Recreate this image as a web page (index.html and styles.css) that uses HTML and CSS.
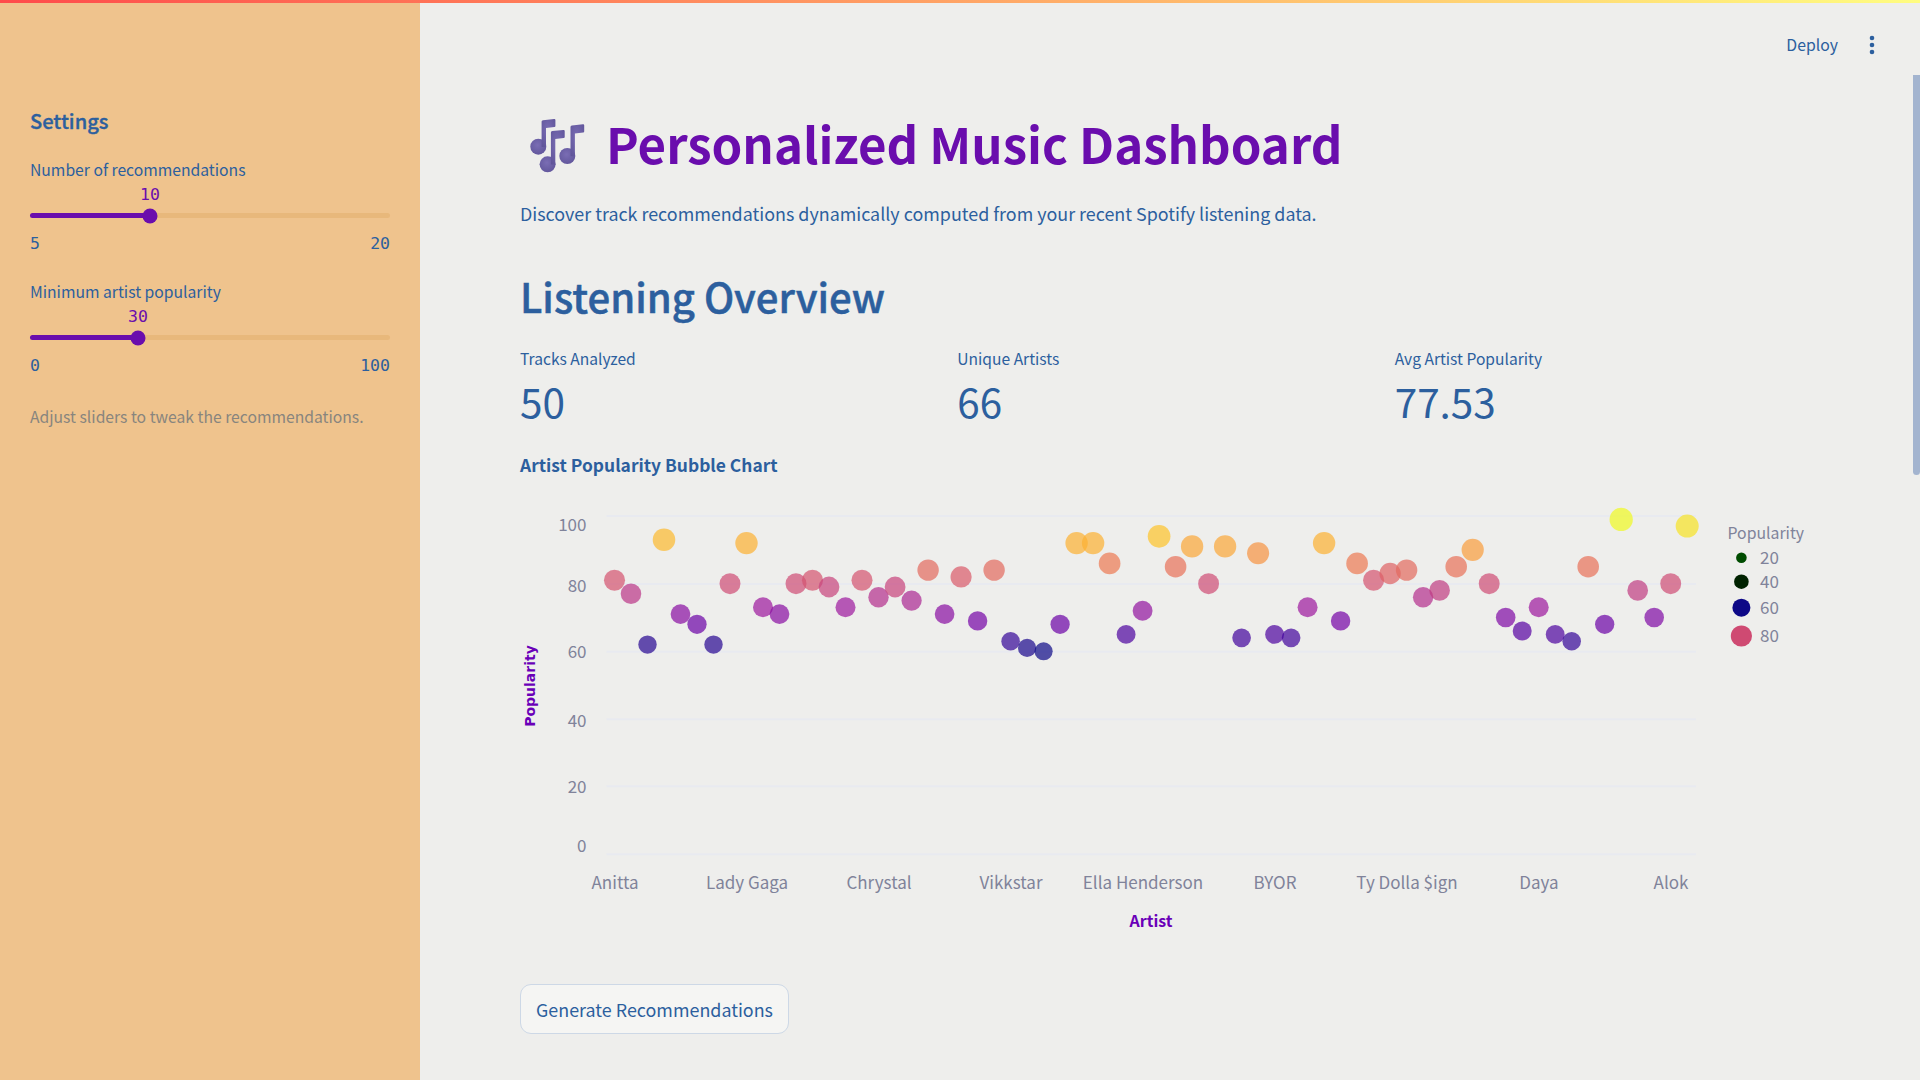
FILE: index.html
```html
<!DOCTYPE html>
<html lang="en">
<head>
<meta charset="utf-8">
<title>Personalized Music Dashboard</title>
<link rel="stylesheet" href="styles.css">
</head>
<body>
<div class="top-stripe"></div>
<div class="scroll-thumb"></div>
<div class="app">
  <aside class="sidebar">
    <h3 class="side-title">Settings</h3>
    <div class="field">
      <div class="field-label">Number of recommendations</div>
      <div class="slider">
        <div class="slider-fill" style="width:33.33%"></div>
        <div class="slider-thumb" style="left:33.33%"></div>
        <div class="slider-value" style="left:33.33%">10</div>
      </div>
      <div class="slider-ends"><span>5</span><span>20</span></div>
    </div>
    <div class="field">
      <div class="field-label">Minimum artist popularity</div>
      <div class="slider">
        <div class="slider-fill" style="width:30%"></div>
        <div class="slider-thumb" style="left:30%"></div>
        <div class="slider-value" style="left:30%">30</div>
      </div>
      <div class="slider-ends"><span>0</span><span>100</span></div>
    </div>
    <p class="side-hint">Adjust sliders to tweak the recommendations.</p>
  </aside>
  <main class="main">
    <header class="toolbar">
      <span class="deploy">Deploy</span>
      <svg class="kebab" width="6" height="20" viewBox="0 0 6 20"><circle cx="3" cy="3" r="2.3"/><circle cx="3" cy="10" r="2.3"/><circle cx="3" cy="17" r="2.3"/></svg>
    </header>
    <div class="content">
      <h1 class="title">
        <svg class="title-icon" width="66" height="64" viewBox="0 0 66 64">
          <defs><radialGradient id="noteShade" cx="45%" cy="40%" r="70%"><stop offset="0" stop-color="#7a6db4"/><stop offset="1" stop-color="#5f5499"/></radialGradient></defs>
          <g fill="url(#noteShade)">
            <circle cx="18.3" cy="32.7" r="8"/><path d="M21.6 33V7.6Q21.6 6.4 23 6.2L34.2 5q1.2-.1 1.2 1.1V12q0 1-1 1.1L26 14V33z"/>
            <circle cx="27.6" cy="50.3" r="8"/><path d="M30.9 50.6V18.5q0-1.2 1.4-1.4L43.5 16q1.2-.1 1.2 1.100V23q0 1-1 1.100L35.300 25V50.600z"/>
            <circle cx="47.300" cy="42" r="8"/><path d="M50.500 42.300V13q0-1.200 1.400-1.400L63 10.200q1.200-.100 1.200 1.100V17.400q0 1-1 1.100L54.900 19.400V42.300z"/>
          </g>
        </svg>
        <span>Personalized Music Dashboard</span>
      </h1>
      <p class="lead">Discover track recommendations dynamically computed from your recent Spotify listening data.</p>
      <h2 class="section">Listening Overview</h2>
      <div class="metrics">
        <div><div class="metric-label">Tracks Analyzed</div><div class="metric-value">50</div></div>
        <div><div class="metric-label">Unique Artists</div><div class="metric-value">66</div></div>
        <div><div class="metric-label">Avg Artist Popularity</div><div class="metric-value">77.53</div></div>
      </div>
      <div class="chart-title">Artist Popularity Bubble Chart</div>
      <svg class="chart" id="chart" width="1296" height="470" viewBox="0 0 1296 470">
        <g class="grid">
          <line x1="86.500" x2="1176" y1="26" y2="26"/>
          <line x1="86.500" x2="1176" y1="94" y2="94"/>
          <line x1="86.500" x2="1176" y1="161.700" y2="161.700"/>
          <line x1="86.500" x2="1176" y1="229.300" y2="229.300"/>
          <line x1="86.500" x2="1176" y1="296.300" y2="296.300"/>
          <line x1="86.500" x2="1176" y1="364.300" y2="364.300"/>
        </g>
        <g class="tick y-tick">
          <text x="66.500" y="33.500">100</text>
          <text x="66.500" y="94.200">80</text>
          <text x="66.500" y="160.500">60</text>
          <text x="66.500" y="229">40</text>
          <text x="66.500" y="295.500">20</text>
          <text x="66.500" y="354.500">0</text>
        </g>
        <g class="tick x-tick">
          <text x="95" y="391.500">Anitta</text>
          <text x="227" y="391.500">Lady Gaga</text>
          <text x="359" y="391.500">Chrystal</text>
          <text x="491" y="391.500">Vikkstar</text>
          <text x="623" y="391.500">Ella Henderson</text>
          <text x="755" y="391.500">BYOR</text>
          <text x="887" y="391.500">Ty Dolla $ign</text>
          <text x="1019" y="391.500">Daya</text>
          <text x="1151" y="391.500">Alok</text>
        </g>
        <text class="axis-title axis-y" transform="translate(9.500 196) rotate(-90)">Popularity</text>
        <text class="axis-title axis-x" x="631" y="430">Artist</text>
        <g id="bubbles"></g>
        <g class="legend">
          <text class="legend-title" x="1207.500" y="42">Popularity</text>
          <circle class="lg20" cx="1221.400" cy="67.700" r="5.300"/><text x="1240" y="66.200">20</text>
          <circle class="lg40" cx="1221.400" cy="91.700" r="7.300"/><text x="1240" y="90.200">40</text>
          <circle class="lg60" cx="1221.400" cy="117.700" r="9"/><text x="1240" y="116.200">60</text>
          <circle class="lg80" cx="1221.400" cy="146" r="10.600"/><text x="1240" y="144.500">80</text>
        </g>
      </svg>
      <button class="generate" type="button">Generate Recommendations</button>
    </div>
  </main>
</div>
<script src="chart.js"></script>
</body>
</html>
```
FILE: styles.css
```css
* { box-sizing: border-box; }
html, body { margin: 0; height: 100%; overflow: hidden; }
body {
  background: #eeeeec;
  color: #2c5f9e;
  font-family: "Noto Sans CJK SC", "Noto Sans", sans-serif;
}
.top-stripe {
  position: fixed; top: 0; left: 0; right: 0; height: 3px;
  background: linear-gradient(90deg, #ff4b4b, #fffd80);
}
.scroll-thumb {
  position: fixed; top: 75px; right: 0; width: 7px; height: 400px;
  background: #a3b4cf; border-radius: 0 0 4px 4px;
}
.app { display: flex; height: 100vh; }
.sidebar {
  flex: 0 0 420px; background: #efc38d; padding: 106px 30px 0;
}
.side-title { margin: 0 0 23px; font-size: 20.1px; line-height: 30px; font-weight: 500; -webkit-text-stroke: 0.35px currentColor; }
.field { margin-bottom: 27px; }
.field-label { font-size: 15.7px; line-height: 22px; }
.slider {
  position: relative; height: 5px; margin-top: 32px;
  background: #e8b87b; border-radius: 3px;
}
.slider-fill { height: 100%; background: #6a0dad; border-radius: 3px; }
.slider-thumb {
  position: absolute; top: 50%; width: 15px; height: 15px; border-radius: 50%;
  background: #6a0dad; transform: translate(-50%, -50%);
}
.slider-value {
  position: absolute; bottom: 13px; transform: translateX(-50%);
  font: 16.5px/20px "DejaVu Sans Mono", monospace; color: #6a0dad;
}
.slider-ends {
  display: flex; justify-content: space-between; margin-top: 16px;
  font: 16.5px/20px "DejaVu Sans Mono", monospace;
}
.side-hint { margin: 29px 0 0; font-size: 15.7px; line-height: 24px; color: #88857e; }
.main { flex: 1; min-width: 0; display: flex; flex-direction: column; }
.toolbar {
  height: 90px; flex: none; display: flex; align-items: center; justify-content: flex-end;
  gap: 31px; padding-right: 45px;
}
.deploy { font-size: 15.8px; line-height: 24px; }
.kebab { fill: #2c5f9e; display: block; }
.content { padding: 21px 104px 0 100px; }
.title {
  display: flex; align-items: center; gap: 20px; margin: 0; height: 64px;
  font-size: 49.2px; line-height: 64px; font-weight: 700; color: #6a0dad;
}
.title-icon { flex: none; margin-top: 5px; }
.lead { margin: 23px 0 0; font-size: 17.9px; line-height: 30px; }
.section { margin: 41px 0 0; font-size: 40.1px; line-height: 54px; font-weight: 500; -webkit-text-stroke: 0.5px currentColor; }
.metrics { display: grid; grid-template-columns: repeat(3, 1fr); gap: 16px; margin-top: 24px; }
.metric-label { font-size: 15.6px; line-height: 22px; }
.metric-value { margin-top: 7px; font-size: 40.5px; line-height: 50px; font-weight: 400; }
.chart-title { margin-top: 25px; font-size: 17.4px; line-height: 28px; font-weight: 700; }
.chart { display: block; margin-top: 11px; }
.grid line { stroke: #e8eaf0; stroke-width: 2; }
.tick text, .legend text { fill: #80839a; font-size: 17px; dominant-baseline: central; }
.legend .legend-title { font-size: 15.8px; }
.y-tick text { text-anchor: end; }
.x-tick text { text-anchor: middle; }
.axis-title { fill: #6a00b8; font-weight: 700; text-anchor: middle; dominant-baseline: central; }
.axis-y { font-family: "DejaVu Sans", sans-serif; font-size: 14px; }
.axis-x { font-size: 16px; }
.lg20 { fill: #004c00; }
.lg40 { fill: #002200; }
.lg60 { fill: #0d0887; }
.lg80 { fill: #cf4a72; }
.generate {
  display: block; margin-top: 24px; width: 269px; height: 50px; padding: 0;
  background: #f5f5f3; border: 1.5px solid #cdd8e6; border-radius: 11px;
  color: #2c5f9e; font: 400 17.9px/28px "Noto Sans CJK SC", "Noto Sans", sans-serif;
}
```
FILE: chart.js
```js
var values = [81,77,62,93,71,68,62,80,92,73,71,80,81,79,73,81,76,79,75,84,71,82,69,84,63,61,60,68,92,92,86,65,72,94,85,91,80,91,64,89,65,64,73,92,69,86,81,83,84,76,78,85,90,80,70,66,73,65,63,85,68,99,78,70,80,97];
var stops = [[13,8,135],[70,3,159],[114,1,168],[156,23,158],[189,55,134],[216,87,107],[237,121,83],[251,159,58],[253,202,38],[240,249,33]];
function plasma(t) {
  var p = Math.min(Math.max(t, 0), 1) * (stops.length - 1);
  var i = Math.min(Math.floor(p), stops.length - 2), f = p - i;
  return "rgb(" + [0, 1, 2].map(function (k) {
    return Math.round(stops[i][k] + (stops[i + 1][k] - stops[i][k]) * f);
  }).join(",") + ")";
}
var layer = document.getElementById("bubbles");
values.forEach(function (v, i) {
  var c = document.createElementNS("http://www.w3.org/2000/svg", "circle");
  c.setAttribute("cx", (94.5 + 16.503 * i).toFixed(1));
  c.setAttribute("cy", (364.3 - 3.383 * v).toFixed(1));
  c.setAttribute("r", (1.17 * Math.sqrt(v)).toFixed(2));
  c.setAttribute("fill", plasma((v - 60) / 39));
  c.setAttribute("fill-opacity", "0.7");
  layer.appendChild(c);
});
```
